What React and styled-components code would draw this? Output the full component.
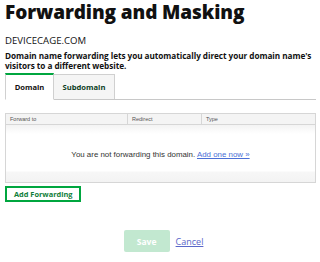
import React from "react";
import styled, { createGlobalStyle } from "styled-components";

const GlobalStyle = createGlobalStyle`
  html, body {
    margin: 0;
    padding: 0;
    background: #fff;
  }
  body {
    font-family: "Open Sans", "Liberation Sans", sans-serif;
    color: #111;
  }
`;

const Page = styled.div`
  width: 320px;
  height: 262px;
  padding: 1px 4px 0 5px;
  box-sizing: border-box;
  overflow: hidden;
`;

const Title = styled.h1`
  margin: 0;
  font-family: "Open Sans", sans-serif;
  font-weight: 800;
  font-size: 19px;
  line-height: 22px;
  letter-spacing: -0.1px;
  color: #111;
`;

const DomainName = styled.div`
  margin-top: 12px;
  font-family: "Open Sans", sans-serif;
  font-size: 9.6px;
  line-height: 12px;
  color: #111;
`;

const Intro = styled.p`
  margin: 4px 0 0;
  font-family: "Open Sans", sans-serif;
  font-weight: 700;
  font-size: 8.2px;
  line-height: 10px;
  letter-spacing: -0.05px;
  color: #111;
`;

const Tabs = styled.div`
  display: flex;
  align-items: flex-end;
  margin-top: 2px;
  border-bottom: 1px solid #c8c8c8;
`;

const Tab = styled.div`
  box-sizing: border-box;
  display: flex;
  align-items: center;
  justify-content: center;
  width: ${(p) => p.$width}px;
  height: ${(p) => (p.$active ? "27px" : "25px")};
  margin-bottom: ${(p) => (p.$active ? "-1px" : "0")};
  font-family: "Open Sans", sans-serif;
  font-weight: 700;
  font-size: 7.6px;
  color: ${(p) => (p.$active ? "#111" : "#0b3d1e")};
  background: ${(p) => (p.$active ? "#fff" : "#f5f5f5")};
  border: 1px solid #d0d0d0;
  border-top: ${(p) => (p.$active ? "2px solid #00a63f" : "1px solid #d0d0d0")};
  border-bottom: ${(p) => (p.$active ? "1px solid #fff" : "none")};
  border-left: ${(p) => (p.$first ? "1px solid #d0d0d0" : "none")};
`;

const Table = styled.div`
  margin-top: 13px;
  border: 1px solid #d6d6d6;
  font-family: "Liberation Sans", Arial, sans-serif;
`;

const HeaderRow = styled.div`
  display: grid;
  grid-template-columns: 121px 74px 1fr;
  height: 10px;
  background: #f4f4f4;
  border-bottom: 1px solid #d6d6d6;
`;

const HeaderCell = styled.div`
  font-size: 5.5px;
  line-height: 10px;
  padding-left: 4px;
  color: #555;
  border-left: ${(p) => (p.$divided ? "1px solid #d6d6d6" : "none")};
`;

const Body = styled.div`
  height: 57px;
  display: flex;
  align-items: center;
  justify-content: center;
  background: linear-gradient(
    #f3f3f3 0px,
    #fff 9px,
    #fff 46px,
    #f7f7f7 47px,
    #f3f3f3 57px
  );
`;

const Message = styled.div`
  font-size: 7.9px;
  color: #333;
  padding-top: 2px;
`;

const Link = styled.a`
  color: #4b6fd6;
  text-decoration: underline;
  cursor: pointer;
`;

const AddButton = styled.button`
  display: block;
  margin-top: 3px;
  height: 16px;
  padding: 0 7px;
  background: #fff;
  border: 2px solid #00a63f;
  font-family: "Open Sans", sans-serif;
  font-weight: 700;
  font-size: 7.4px;
  color: #0f7d3a;
  cursor: pointer;
`;

const Actions = styled.div`
  display: flex;
  align-items: center;
  justify-content: center;
  gap: 6px;
  margin-top: 28px;
  padding-left: 6px;
`;

const SaveButton = styled.button`
  width: 46px;
  height: 22px;
  border: none;
  border-radius: 2px;
  background: #c2e8d0;
  color: #fff;
  font-family: "Open Sans", sans-serif;
  font-weight: 700;
  font-size: 8.5px;
`;

const CancelLink = styled(Link)`
  font-family: "Open Sans", sans-serif;
  font-size: 9px;
  color: #5a67c9;
`;

export default function App() {
  return (
    <>
      <GlobalStyle />
      <Page>
        <Title>Forwarding and Masking</Title>
        <DomainName>DEVICECAGE.COM</DomainName>
        <Intro>
          Domain name forwarding lets you automatically direct your domain name's
          visitors to a different website.
        </Intro>
        <Tabs>
          <Tab $active $first $width={49}>Domain</Tab>
          <Tab $width={61}>Subdomain</Tab>
        </Tabs>
        <Table>
          <HeaderRow>
            <HeaderCell>Forward to</HeaderCell>
            <HeaderCell $divided>Redirect</HeaderCell>
            <HeaderCell $divided>Type</HeaderCell>
          </HeaderRow>
          <Body>
            <Message>
              You are not forwarding this domain. <Link>Add one now »</Link>
            </Message>
          </Body>
        </Table>
        <AddButton>Add Forwarding</AddButton>
        <Actions>
          <SaveButton>Save</SaveButton>
          <CancelLink>Cancel</CancelLink>
        </Actions>
      </Page>
    </>
  );
}
